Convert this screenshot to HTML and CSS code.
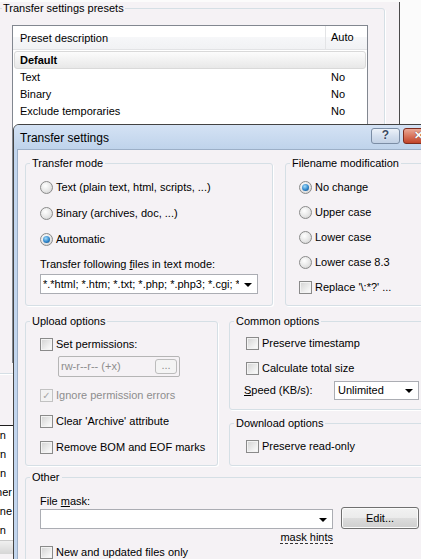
FILE: index.html
```html
<!DOCTYPE html>
<html>
	<head>
		<meta charset="utf-8">
		<title>Transfer settings</title>
		<link rel="stylesheet" href="styles.css">
	</head>
	<body>
	<div class="screen">
		<!-- preferences window behind the dialog -->
		<div class="owner">
			<fieldset class="group presets">
				<legend>Transfer settings presets</legend>
				<div class="listview">
					<div class="lv-head">
						<span class="col-desc">Preset description</span>
						<span class="col-auto">Auto</span>
					</div>
					<div class="lv-row selected">
						<span class="col-desc"><b>Default</b></span>
						<span class="col-auto"></span>
					</div>
					<div class="lv-row">
						<span class="col-desc">Text</span>
						<span class="col-auto">No</span>
					</div>
					<div class="lv-row">
						<span class="col-desc">Binary</span>
						<span class="col-auto">No</span>
					</div>
					<div class="lv-row">
						<span class="col-desc">Exclude temporaries</span>
						<span class="col-auto">No</span>
					</div>
				</div>
			</fieldset>
			<div class="tree">
				<div class="tree-row">Open</div>
				<div class="tree-row">Down</div>
				<div class="tree-row">Hidden</div>
				<div class="tree-row long">Other</div>
				<div class="tree-row long">None</div>
				<div class="tree-row">Open</div>
				<div class="tree-scroll"></div>
			</div>
		</div>

		<!-- the dialog itself -->
		<div class="dialog">
			<div class="titlebar">
				<span class="caption">Transfer settings</span>
				<span class="cap-btn help">?</span>
				<span class="cap-btn close">&#x2715;</span>
			</div>
			<div class="dlg-body">
				<div class="dlg-row top-row">
					<fieldset class="group mode">
						<legend>Transfer mode</legend>
						<div class="gb">
							<div class="opt"><span class="rb"></span>Text (plain text, html, scripts, ...)</div>
							<div class="opt"><span class="rb"></span>Binary (archives, doc, ...)</div>
							<div class="opt"><span class="rb on"></span>Automatic</div>
							<div class="field-label">Transfer following <u>f</u>iles in text mode:</div>
							<div class="combo mask-combo">
								<span class="combo-text">*.*html; *.htm; *.txt; *.php; *.php3; *.cgi; *.c; *.cpp</span>
								<span class="arrow"></span>
							</div>
						</div>
					</fieldset>
					<fieldset class="group names">
						<legend>Filename modification</legend>
						<div class="gb">
							<div class="opt"><span class="rb on"></span>No change</div>
							<div class="opt"><span class="rb"></span>Upper case</div>
							<div class="opt"><span class="rb"></span>Lower case</div>
							<div class="opt"><span class="rb"></span>Lower case 8.3</div>
							<div class="opt"><span class="cb"></span>Replace '\:*?' ...</div>
						</div>
					</fieldset>
				</div>

				<div class="dlg-row mid-row">
					<fieldset class="group upload">
						<legend>Upload options</legend>
						<div class="gb">
							<div class="opt"><span class="cb"></span>Set permissions:</div>
							<div class="perm">
								<span class="perm-text">rw-r--r-- (+x)</span>
								<span class="perm-btn">...</span>
							</div>
							<div class="opt disabled"><span class="cb checked"></span>Ignore permission errors</div>
							<div class="opt"><span class="cb"></span>Clear 'Archive' attribute</div>
							<div class="opt"><span class="cb"></span>Remove BOM and EOF marks</div>
						</div>
					</fieldset>
					<div class="right-col">
						<fieldset class="group common">
							<legend>Common options</legend>
							<div class="gb">
								<div class="opt short"><span class="cb"></span>Preserve timestamp</div>
								<div class="opt short"><span class="cb"></span>Calculate total size</div>
								<div class="speed">
									<span class="speed-label"><u>S</u>peed (KB/s):</span>
									<div class="combo speed-combo">
										<span class="combo-text">Unlimited</span>
										<span class="arrow"></span>
									</div>
								</div>
							</div>
						</fieldset>
						<fieldset class="group download">
							<legend>Download options</legend>
							<div class="gb">
								<div class="opt"><span class="cb"></span>Preserve read-only</div>
							</div>
						</fieldset>
					</div>
				</div>

				<fieldset class="group other">
					<legend>Other</legend>
					<div class="gb">
						<div class="field-label mask-label">File <u>m</u>ask:</div>
						<div class="mask-row">
							<div class="combo file-combo">
								<span class="combo-text"></span>
								<span class="arrow"></span>
							</div>
							<span class="button">Edit...</span>
						</div>
						<div class="hints"><span class="hint-link">mask hints</span></div>
						<div class="opt tight"><span class="cb"></span>New and updated files only</div>
					</div>
				</fieldset>
			</div>
		</div>
	</div>
	</body>
</html>
```

FILE: styles.css
```css
html, body{
	margin: 0;
	padding: 0;
}
body{
	font-family: "Liberation Sans", Arial, sans-serif;
	font-size: 11px;
	line-height: 13px;
	color: #000;
	background: #fbfbfb;
}
.screen{
	position: relative;
	width: 421px;
	height: 559px;
	overflow: hidden;
}

/* window behind */
.owner{
	width: 399px;
	height: 559px;
	border-right: 1px solid #4a4a4a;
	background: #f5f2f5;
}
.group{
	margin: 0;
	padding: 0;
	min-width: 0;
	border: 1px solid #d5dfe5;
	border-radius: 3px;
	box-shadow: 1px 1px 0 #fff;
	box-sizing: border-box;
}
.group legend{
	padding: 0 2px;
	margin-left: 4px;
	line-height: 13px;
}
.presets{
	margin: 2px 0 0 -6px;
	width: 391px;
	height: 372px;
}
.presets legend{
	margin-left: 7px;
	padding: 0 1px;
}
.listview{
	margin: 10px 0 0 17px;
	width: 356px;
	height: 338px;
	border: 1px solid #828790;
	background: #fff;
	box-sizing: border-box;
}
.lv-head{
	display: flex;
	height: 24px;
	align-items: center;
	margin-bottom: 1px;
	background: linear-gradient(#fff 50%, #f6f7f9 50%, #f1f2f4);
	border-bottom: 1px solid #e2e3e5;
	box-sizing: border-box;
}
.lv-head .col-desc{
	border-right: 1px solid #e3e4e6;
	height: 24px;
	line-height: 24px;
}
.col-desc{
	width: 313px;
	padding-left: 7px;
	box-sizing: border-box;
}
.col-auto{
	padding-left: 5px;
}
.lv-row{
	display: flex;
	height: 17px;
	align-items: center;
}
.lv-row .col-auto{
	padding-left: 5px;
}
.lv-row.selected{
	height: 18px;
	margin: 0 1px;
	border: 1px solid #d9d9d9;
	border-radius: 3px;
	background: linear-gradient(#fcfcfc, #e8e8e8);
	box-sizing: border-box;
}
.lv-row.selected .col-desc{
	padding-left: 5px;
	width: 311px;
}
.tree{
	margin-top: 51px;
	width: 40px;
	border-top: 1px solid #1e1e1e;
	background: #fff;
}
.tree-row{
	height: 19px;
	line-height: 19px;
	width: 6px;
	overflow: hidden;
	direction: rtl;
	white-space: nowrap;
}
.tree-row.long{
	width: 12px;
}
.tree-scroll{
	height: 13px;
	border-top: 1px solid #c9c9c9;
	background: linear-gradient(#f0f0f0, #d6d6d6);
}

/* dialog */
.dialog{
	position: absolute;
	left: 13px;
	top: 124px;
	width: 440px;
	height: 460px;
	border: 1px solid #434343;
	border-radius: 6px 6px 0 0;
	background: #c3d6ee;
	box-sizing: border-box;
}
.titlebar{
	display: flex;
	align-items: center;
	height: 24px;
	padding: 0 6px;
	border-radius: 5px 5px 0 0;
	background: linear-gradient(#d4e2f4, #bfd3eb);
}
.caption{
	flex: 1;
	font-size: 12px;
	margin-top: 3px;
}
.cap-btn{
	height: 16px;
	border-radius: 3px;
	display: flex;
	align-items: center;
	justify-content: center;
	font-weight: bold;
	box-sizing: border-box;
	margin-top: -3px;
}
.help{
	width: 29px;
	border: 1px solid #7b8da5;
	background: linear-gradient(#edf2f9, #d4dfee 50%, #c2d1e5);
	color: #3b4b63;
	font-size: 12px;
	text-shadow: 0 0 2px #fff;
}
.close{
	width: 31px;
	margin-left: 3px;
	margin-right: 12px;
	border: 1px solid #7e2c1e;
	background: linear-gradient(#eaa896, #d8755d 50%, #c14329);
	color: #fff;
	font-size: 11px;
	text-shadow: 0 0 1px #4a1208;
}
.dlg-body{
	margin: 0 3px;
	height: 440px;
	padding: 7px 7px 0;
	border: 1px solid #9cafc7;
	background: #f5f2f5;
}
.dlg-row{
	display: flex;
}
.top-row{
	gap: 12px;
	height: 149px;
}
.mid-row{
	gap: 11px;
	height: 151px;
	margin-top: 9px;
}
.mode{
	width: 248px;
}
.mode .gb{
	padding: 4px 14px 0;
}
.names{
	flex: 1;
}
.names .gb{
	padding: 5px 13px 0;
}
.upload{
	width: 193px;
}
.upload .gb{
	padding: 3px 14px 0;
}
.right-col{
	flex: 1;
	display: flex;
	flex-direction: column;
	gap: 7px;
}
.common{
	height: 95px;
}
.common .gb,
.download .gb{
	padding: 3px 16px 0;
}
.download{
	flex: 1;
}
.other{
	margin-top: 5px;
	height: 120px;
}
.other .gb{
	padding: 0 14px;
}

/* controls */
.opt{
	display: flex;
	align-items: center;
	height: 26px;
	white-space: nowrap;
}
.names .opt,
.opt.short{
	height: 25px;
}
.opt.disabled{
	color: #8d8d8d;
}
.rb{
	width: 13px;
	height: 13px;
	margin-right: 3px;
	border-radius: 50%;
	border: 1px solid #8a8a8a;
	background: radial-gradient(circle at 40% 35%, #fff, #e6e6e6 55%, #c9c9c9);
	box-sizing: border-box;
	display: flex;
	align-items: center;
	justify-content: center;
	flex: none;
}
.rb.on::after{
	content: "";
	width: 7px;
	height: 7px;
	border-radius: 50%;
	background: radial-gradient(circle at 40% 35%, #a3dcfa, #2f86cb 55%, #0f4173);
}
.cb{
	width: 13px;
	height: 13px;
	margin-right: 3px;
	border: 1px solid #8a8a8a;
	background: linear-gradient(135deg, #d2d2d2, #f2f2f2 70%, #fdfdfd);
	box-shadow: inset 0 0 0 1px #f3f3f3;
	box-sizing: border-box;
	flex: none;
	display: flex;
	align-items: center;
	justify-content: center;
	font-size: 11px;
	line-height: 11px;
	color: #a6a6a6;
}
.cb.checked{
	border-color: #c2c2c2;
	background: #f2f2f2;
}
.cb.checked::after{
	content: "\2713";
	font-family: "DejaVu Sans", sans-serif;
	font-size: 10px;
	font-weight: bold;
}
.field-label{
	margin-top: 6px;
	white-space: nowrap;
}
.combo{
	display: flex;
	align-items: center;
	height: 20px;
	border: 1px solid #abadb3;
	background: #fff;
	box-sizing: border-box;
	padding-left: 2px;
}
.combo-text{
	flex: 1;
	overflow: hidden;
	white-space: nowrap;
}
.arrow{
	width: 0;
	height: 0;
	margin: 1px 5px 0 4px;
	border-left: 4px solid transparent;
	border-right: 4px solid transparent;
	border-top: 4px solid #000;
}
.mask-combo{
	margin-top: 3px;
}
.mask-combo .combo-text{
	margin-right: 1px;
}
.perm{
	display: flex;
	align-items: center;
	width: 122px;
	height: 21px;
	margin: -1px 0 5px 18px;
	border: 1px solid #b5b5b5;
	border-radius: 2px;
	box-sizing: border-box;
	color: #8d8d8d;
	padding-left: 2px;
}
.perm-text{
	flex: 1;
}
.perm-btn{
	width: 22px;
	height: 15px;
	margin-right: 2px;
	border: 1px solid #bcbcbc;
	border-radius: 3px;
	box-sizing: border-box;
	text-align: center;
	line-height: 11px;
	background: #f4f4f4;
}
.speed{
	display: flex;
	align-items: center;
	height: 19px;
	margin-left: -2px;
}
.speed-label{
	width: 90px;
}
.speed-combo{
	width: 85px;
	height: 19px;
	padding-left: 3px;
}
.mask-label{
	margin-top: 11px;
	line-height: 12px;
}
.mask-row{
	display: flex;
	align-items: flex-end;
	gap: 8px;
}
.file-combo{
	width: 293px;
}
.button{
	width: 78px;
	height: 22px;
	border: 1px solid #707070;
	border-radius: 3px;
	box-sizing: border-box;
	background: linear-gradient(#f2f2f2, #ebebeb 50%, #dddddd 50%, #cfcfcf);
	box-shadow: inset 0 0 0 1px #fbfbfb;
	display: flex;
	align-items: center;
	justify-content: center;
}
.hints{
	width: 293px;
	text-align: right;
	margin-top: 2px;
	line-height: 12px;
}
.hint-link{
	border-bottom: 1px dashed #333;
}
.opt.tight{
	height: 13px;
	margin-top: 3px;
}
```
